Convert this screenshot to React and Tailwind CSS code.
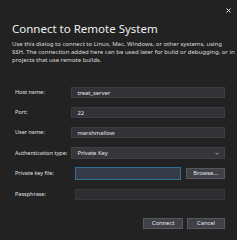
import { useState } from "react";

// Connect to Remote System dialog (dark theme)
const fieldCls =
  "h-[11px] bg-[#333337] border border-[#3c3c40] text-[5.8px] leading-[9px] text-[#e6e6e6] px-[5px] outline-none";
const labelCls = "w-[60px] pl-[3px] text-[5.5px] leading-[11px] text-[#e0e0e0] whitespace-nowrap";
const btnCls =
  "h-[11px] bg-[#3f4146] border border-[#55585d] text-[5.8px] leading-[9px] text-[#e8e8e8] flex items-center justify-center";

function Row({ label, children, className = "" }) {
  return (
    <div className={`flex items-center ${className}`}>
      <div className={labelCls}>{label}</div>
      {children}
    </div>
  );
}

export default function App() {
  const [host, setHost] = useState("treat_server");
  const [port, setPort] = useState("22");
  const [user, setUser] = useState("marshmallow");

  return (
    <div
      className="relative w-[237px] h-[240px] bg-[#222222] text-[#e6e6e6] overflow-hidden"
      style={{ fontFamily: '"Noto Sans", "Open Sans", sans-serif' }}
    >
      {/* close button sits over the dialog corner */}
      <button className="absolute top-[6px] right-[4px] w-[9px] h-[9px] flex items-center justify-center">
        <svg width="7" height="7" viewBox="0 0 7 7" className="block">
          <path d="M1.5 1.5 L5.5 5.5 M5.5 1.5 L1.5 5.5" stroke="#e6e6e6" strokeWidth="1" />
        </svg>
      </button>

      <div className="px-[12px] pt-[20px]">
        <div className="mt-[2px] text-[11.5px] leading-[14px] text-[#f0f0f0] whitespace-nowrap">
          Connect to Remote System
        </div>
        <div className="mt-[4px] text-[6px] leading-[8px] text-[#dcdcdc] whitespace-nowrap">
          Use this dialog to connect to Linux, Mac, Windows, or other systems, using
          <br />
          SSH. The connection added here can be used later for build or debugging, or in
          <br />
          projects that use remote builds.
        </div>

        <div className="mt-[23px] flex flex-col">
          <Row label="Host name:">
            <input className={`${fieldCls} w-[155px]`} value={host} onChange={(e) => setHost(e.target.value)} />
          </Row>
          <Row label="Port:" className="mt-[9px]">
            <input className={`${fieldCls} w-[155px]`} value={port} onChange={(e) => setPort(e.target.value)} />
          </Row>
          <Row label="User name:" className="mt-[9px]">
            <input className={`${fieldCls} w-[155px]`} value={user} onChange={(e) => setUser(e.target.value)} />
          </Row>
          <Row label="Authentication type:" className="mt-[9px]">
            <div className="w-[155px] h-[12px] bg-[#37373b] border border-[#3f3f44] flex items-center justify-between px-[5px]">
              <span className="text-[5.8px] leading-[9px] text-[#e6e6e6]">Private Key</span>
              <svg width="4" height="3" viewBox="0 0 4 3">
                <path d="M0.5 0.8 L2 2.3 L3.5 0.8" stroke="#cfcfcf" strokeWidth="0.7" fill="none" />
              </svg>
            </div>
          </Row>
          <Row label="Private key file:" className="mt-[8px]">
            <div className="ml-[4px] w-[107px] h-[13px] bg-[#363b47] border border-[#2f6f8f]" />
            <button className={`${btnCls} ml-[5px] w-[39px]`}>Browse...</button>
          </Row>
          <Row label="Passphrase:" className="mt-[9px]">
            <div className="ml-[4px] w-[151px] h-[11px] bg-[#2e2e32] border border-[#38383c]" />
          </Row>
        </div>

        <div className="mt-[18px] flex justify-end gap-[4px]">
          <button className={`${btnCls} w-[40px] border-[#5b6170]`}>Connect</button>
          <button className={`${btnCls} w-[38px]`}>Cancel</button>
        </div>
      </div>
    </div>
  );
}
